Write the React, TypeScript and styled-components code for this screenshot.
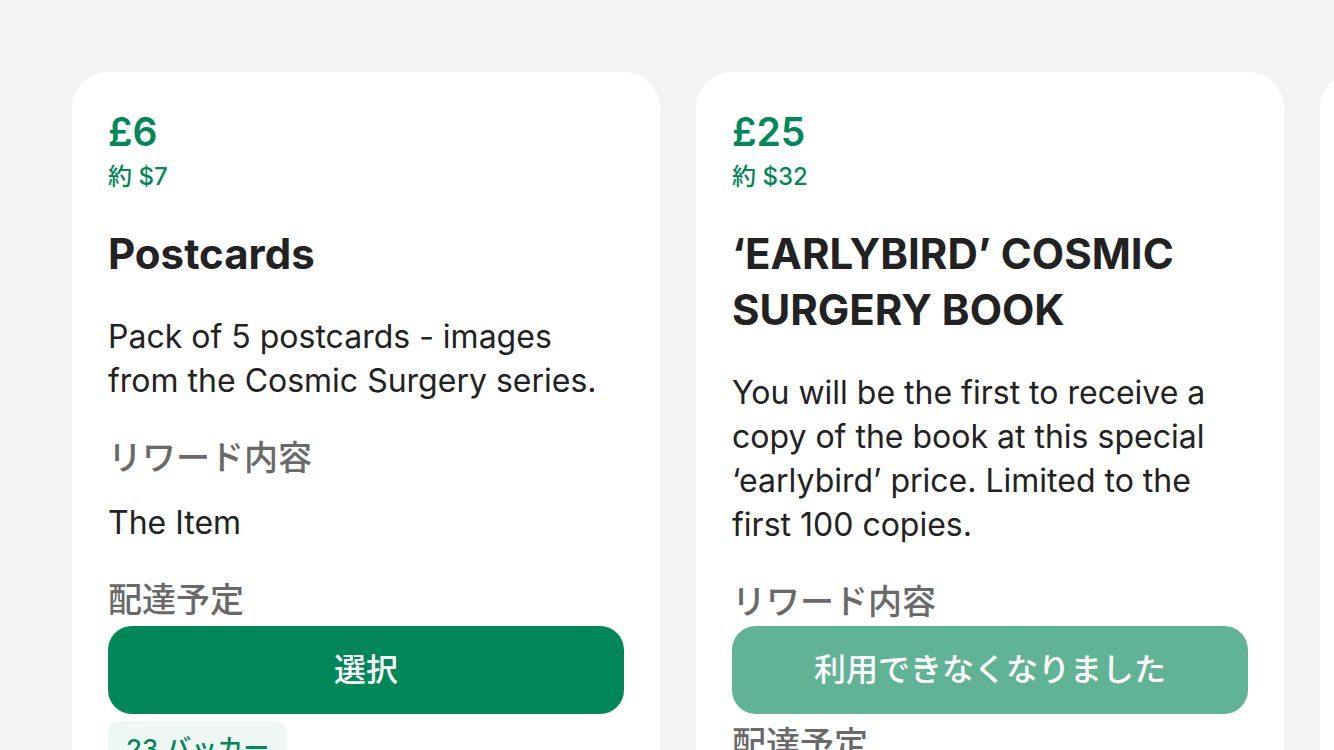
import React from 'react';
import styled, { createGlobalStyle } from 'styled-components';

const GlobalStyle = createGlobalStyle`
  *, *::before, *::after { box-sizing: border-box; }
  body {
    margin: 0;
    background: #f3f3f3;
    color: #222222;
    font-family: Inter, "Noto Sans CJK JP", sans-serif;
    -webkit-font-smoothing: antialiased;
  }
  h2, h3, p { margin: 0; }
`;

const Carousel = styled.main`
  display: flex;
  gap: 36px;
  height: 100vh;
  padding: 72px 0 0 72px;
  overflow: hidden;
`;

const Card = styled.article`
  position: relative;
  flex: 0 0 calc(50% - 43px);
  min-width: 0;
  padding: 36px;
  background: #ffffff;
  border-radius: 36px 36px 0 0;
`;

const Price = styled.p`
  font-size: 39px;
  font-weight: 600;
  line-height: 48px;
  color: #028858;
`;

const Conversion = styled.p`
  margin-top: 7px;
  font-size: 24px;
  font-weight: 500;
  line-height: 28px;
  color: #028858;
`;

const Title = styled.h2`
  margin-top: 35px;
  font-size: 42px;
  font-weight: 700;
  line-height: 56px;
`;

const Description = styled.p`
  margin-top: 33px;
  font-size: 32px;
  line-height: 44px;
`;

const SectionLabel = styled.h3`
  margin-top: 35px;
  font-size: 34px;
  font-weight: 500;
  line-height: 40px;
  color: #696969;
`;

const SectionValue = styled.p`
  min-height: 44px;
  margin-top: 23px;
  font-size: 32px;
  line-height: 44px;
`;

const Badge = styled.span`
  display: inline-block;
  margin-top: 34px;
  padding: 12px 18px;
  border-radius: 12px;
  background: #eef7f4;
  color: #028858;
  font-size: 26px;
  font-weight: 500;
  line-height: 32px;
`;

const PledgeButton = styled.button`
  position: absolute;
  right: 36px;
  bottom: 36px;
  left: 36px;
  height: 88px;
  padding: 0 24px;
  border: 0;
  border-radius: 24px;
  background: #028858;
  color: #ffffff;
  font-family: inherit;
  font-size: 32px;
  font-weight: 500;
  line-height: 40px;
  cursor: pointer;

  &:disabled {
    background: #60b394;
    cursor: default;
  }
`;

interface Reward {
  price: string;
  conversion: string;
  title: string;
  description: string;
  item?: string;
  backers?: string;
  action: string;
  available: boolean;
}

const rewards: Reward[] = [
  {
    price: '£6',
    conversion: '約 $7',
    title: 'Postcards',
    description: 'Pack of 5 postcards - images from the Cosmic Surgery series.',
    item: 'The Item',
    backers: '23 バッカー',
    action: '選択',
    available: true,
  },
  {
    price: '£25',
    conversion: '約 $32',
    title: '‘EARLYBIRD’ COSMIC SURGERY BOOK',
    description:
      'You will be the first to receive a copy of the book at this special ‘earlybird’ price. Limited to the first 100 copies.',
    action: '利用できなくなりました',
    available: false,
  },
];

function RewardCard({ reward }: { reward: Reward }) {
  return (
    <Card>
      <Price>{reward.price}</Price>
      <Conversion>{reward.conversion}</Conversion>
      <Title>{reward.title}</Title>
      <Description>{reward.description}</Description>
      <SectionLabel>リワード内容</SectionLabel>
      <SectionValue>{reward.item}</SectionValue>
      <SectionLabel>配達予定</SectionLabel>
      <SectionValue />
      {reward.backers && <Badge>{reward.backers}</Badge>}
      <PledgeButton type="button" disabled={!reward.available}>
        {reward.action}
      </PledgeButton>
    </Card>
  );
}

export default function App() {
  return (
    <>
      <GlobalStyle />
      <Carousel lang="ja">
        {rewards.map((reward) => (
          <RewardCard key={reward.title} reward={reward} />
        ))}
        <Card />
      </Carousel>
    </>
  );
}
